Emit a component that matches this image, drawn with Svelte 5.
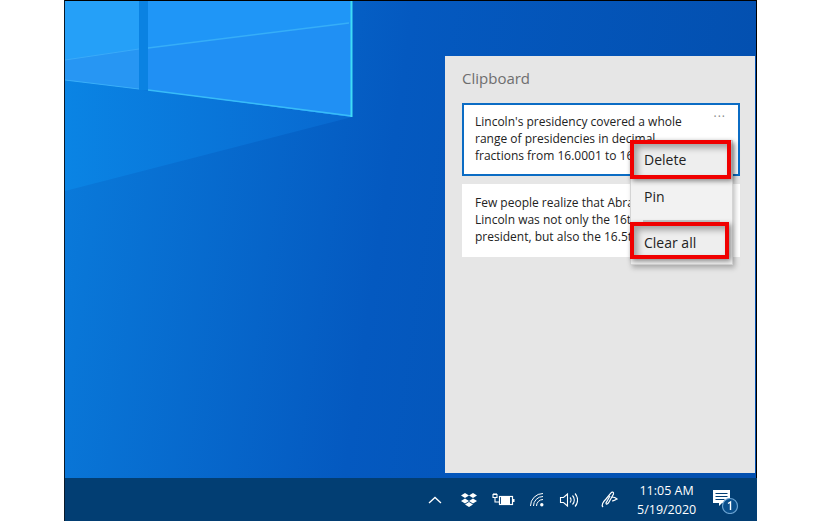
<script lang="ts">
  // Clipboard history entries, the menu is open on the first one.
  const clips = [
    {
      text: "Lincoln's presidency covered a whole range of presidencies in decimal fractions from 16.0001 to 16.9999.",
      active: true,
    },
    {
      text: 'Few people realize that Abraham Lincoln was not only the 16th president, but also the 16.5th.',
      active: false,
    },
  ];
</script>

<div class="page">
  <div class="screen">
    <div class="desktop">
      <svg class="wallpaper" viewBox="0 0 691 477" width="691" height="477" aria-hidden="true">
        <defs>
          <linearGradient id="base" x1="0" y1="0" x2="1" y2="0.1">
            <stop offset="0" stop-color="#0a7cdc" />
            <stop offset="0.5" stop-color="#0459c0" />
            <stop offset="1" stop-color="#0350b0" />
          </linearGradient>
          <linearGradient id="beam" x1="0" y1="0" x2="1" y2="0">
            <stop offset="0" stop-color="#0a84e4" />
            <stop offset="1" stop-color="#0868cf" />
          </linearGradient>
        </defs>
        <rect width="691" height="477" fill="url(#base)" />
        <polygon points="0,79 287,116 0,190" fill="url(#beam)" />
        <!-- window panes -->
        <rect x="74" y="0" width="9" height="89" fill="#0a82e2" />
        <polygon points="0,0 74,0 74,88 0,79" fill="#25a0f8" />
        <polygon points="0,59 74,48 74,88 0,79" fill="#2796f3" />
        <polygon points="83,0 287,0 287,116 83,89" fill="#1f96f7" />
        <polygon points="83,47 284,22 287,22 287,116 83,89" fill="#2090f4" />
        <polyline points="0,59 74,48" stroke="#3aaaf8" stroke-width="1" fill="none" />
        <polyline points="83,47 284,22" stroke="#36aef8" stroke-width="1.5" fill="none" />
        <polyline points="0,79 74,88" stroke="#3aaef8" stroke-width="1" fill="none" />
        <polyline points="83,89 287,115" stroke="#38bcf8" stroke-width="1.5" fill="none" />
        <line x1="286.5" y1="0" x2="286.5" y2="116" stroke="#3fdcf6" stroke-width="2" />
      </svg>

      <section class="panel">
        <h2>Clipboard</h2>
        {#each clips as clip}
          <article class="clip" class:active={clip.active}>
            <p>{clip.text}</p>
            {#if clip.active}<span class="dots">···</span>{/if}
          </article>
        {/each}

        <menu class="clip-menu">
          <li class="hl first">Delete</li>
          <li class="pin">Pin</li>
          <li class="sep"></li>
          <li class="hl last">Clear all</li>
        </menu>
      </section>
    </div>

    <footer class="taskbar">
      <svg class="tray-icon" width="16" height="16" viewBox="0 0 16 16" style="margin-left: 362px">
        <path d="M2 11 L8 5.5 L14 11" fill="none" stroke="#fff" stroke-width="1.3" />
      </svg>
      <svg class="tray-icon" width="18" height="16" viewBox="0 0 18 16" style="margin-left: 17px">
        <path d="M5 1 L9 3.5 L5 6 L1 3.5Z M13 1 L17 3.5 L13 6 L9 3.5Z M5 6.4 L9 9 L5 11.5 L1 9Z M13 6.4 L17 9 L13 11.5 L9 9Z M9 10 L13 12.4 L9 15 L5 12.4Z" fill="#fff" />
      </svg>
      <svg class="tray-icon" width="24" height="16" viewBox="0 0 24 16" style="margin-left: 13px">
        <rect x="8.5" y="4.5" width="13" height="8" fill="none" stroke="#fff" stroke-width="1.2" />
        <rect x="10" y="5" width="9" height="7" fill="#fff" />
        <rect x="22" y="7" width="1.5" height="3" fill="#fff" />
        <path d="M2 2.5h4v3H2z M4 5.5v4.5h4.5 M3 1v1.5 M5 1v1.5" fill="none" stroke="#fff" stroke-width="1.1" />
      </svg>
      <svg class="tray-icon" width="16" height="16" viewBox="0 0 16 16" style="margin-left: 14px">
        <g fill="none" stroke="#fff" stroke-width="1">
          <path d="M1.5 14 A12.5 12.5 0 0 1 14 1.5" />
          <path d="M4.5 14 A9.5 9.5 0 0 1 14 4.5" />
          <path d="M7.5 14 A6.5 6.5 0 0 1 14 7.5" />
        </g>
        <circle cx="12.8" cy="12.8" r="1.7" fill="#fff" />
      </svg>
      <svg class="tray-icon" width="19" height="16" viewBox="0 0 19 16" style="margin-left: 14px">
        <g fill="none" stroke="#fff" stroke-width="1.1">
          <path d="M1.5 5.5h3l4-3.5v12l-4-3.5h-3z" />
          <path d="M11 5.5a3.5 3.5 0 0 1 0 5" />
          <path d="M13.5 3.5a6.5 6.5 0 0 1 0 9" />
          <path d="M16 1.5a9.5 9.5 0 0 1 0 13" />
        </g>
      </svg>
      <svg class="tray-icon" width="20" height="20" viewBox="0 0 20 20" style="margin-left: 22px">
        <path d="M3 17 C1 15 3 12 6 9 L11 3 C12 1.5 14 2 13.5 4 L9 12 C8 14 6 15 6 13 L10 6 M12 7 C14 7 16 8 17 9 C15 10 14 11 12 11" fill="none" stroke="#fff" stroke-width="1.2" />
      </svg>
      <div class="clock">
        <span>11:05 AM</span>
        <span>5/19/2020</span>
      </div>
      <div class="notify">
        <svg width="28" height="26" viewBox="0 0 28 26">
          <path d="M1 2h17v13h-8l-3 3v-3H1z" fill="#fff" />
          <path d="M3.5 5.5h12M3.5 8.5h12M3.5 11.5h9" stroke="#023e73" stroke-width="1" />
          <circle cx="18" cy="18" r="7.5" fill="#0a4f8c" stroke="#6aa2d0" stroke-width="1.2" />
          <path d="M16 15.5l2.5-1.5v8" fill="none" stroke="#fff" stroke-width="1.4" />
        </svg>
      </div>
      <div class="edge"></div>
    </footer>
  </div>
</div>

<style>
  :global(body) {
    margin: 0;
    background: #fff;
  }

  .page {
    padding-left: 64px;
    width: 758px;
    height: 522px;
    box-sizing: border-box;
    font-family: 'Open Sans', 'Liberation Sans', sans-serif;
  }

  .screen {
    width: 693px;
    height: 521px;
    display: flex;
    flex-direction: column;
    background: #000;
    border-left: 1px solid #0a1a2a;
    box-sizing: border-box;
  }

  .desktop {
    position: relative;
    flex: 1;
    padding: 56px 2px 5px 380px;
    overflow: hidden;
  }

  .wallpaper {
    position: absolute;
    left: 0;
    top: 1px;
    display: block;
  }

  .panel {
    position: relative;
    height: 100%;
    background: #e6e6e6;
    padding: 12px 15px 0 17px;
    box-sizing: border-box;
  }

  h2 {
    margin: 0 0 15px;
    font-size: 15px;
    line-height: 20px;
    font-weight: 400;
    color: #6e6e6e;
  }

  .clip {
    position: relative;
    height: 73px;
    box-sizing: border-box;
    background: #fff;
    padding: 10px 50px 0 13px;
    margin-bottom: 8px;
  }

  .clip.active {
    border: 2px solid #0b6cc4;
    padding: 8px 48px 0 11px;
  }

  .clip p {
    margin: 0;
    font-size: 12px;
    line-height: 17px;
    color: #222;
  }

  .dots {
    position: absolute;
    right: 12px;
    top: 5px;
    font-size: 12px;
    line-height: 14px;
    letter-spacing: 1px;
    color: #888;
  }

  .clip-menu {
    position: absolute;
    left: 185px;
    top: 84px;
    width: 103px;
    height: 125px;
    margin: 0;
    padding: 0;
    list-style: none;
    background: #f2f2f2;
    border: 1px solid #d4d4d4;
    box-sizing: border-box;
    box-shadow: 2px 3px 5px rgba(0, 0, 0, 0.25);
    font-size: 14px;
    color: #222;
  }

  .clip-menu li {
    box-sizing: border-box;
    padding-left: 10px;
  }

  .clip-menu .hl {
    position: relative;
    left: -1px;
    border: 4px solid #f00000;
    display: flex;
    align-items: center;
    box-shadow: 2px 2px 5px rgba(0, 0, 0, 0.45), inset 4px 4px 6px rgba(0, 0, 0, 0.32);
    background: #eee;
  }

  .clip-menu .first {
    width: 101px;
    height: 39px;
    margin-top: -1px;
  }

  .clip-menu .last {
    width: 99px;
    height: 37px;
    padding-top: 4px;
  }

  .clip-menu .pin {
    padding-left: 13px;
    height: 36px;
    line-height: 36px;
  }

  .clip-menu .sep {
    margin: 5px 12px 0;
    padding: 0;
    height: 2px;
    background: #c8c8c8;
  }

  .taskbar {
    height: 43px;
    flex: none;
    background: #023e73;
    display: flex;
    align-items: center;
    color: #fff;
  }

  .tray-icon {
    flex: none;
    display: block;
  }

  .clock {
    margin-left: 17px;
    width: 60px;
    display: flex;
    flex-direction: column;
    align-items: center;
    font-size: 12.5px;
    line-height: 19px;
  }

  .notify {
    margin: 3px 0 0 16px;
    display: flex;
  }

  .notify svg {
    display: block;
  }

  .edge {
    margin: 2px 0 0 22px;
    width: 1px;
    align-self: stretch;
    background: #4a7398;
  }
</style>
